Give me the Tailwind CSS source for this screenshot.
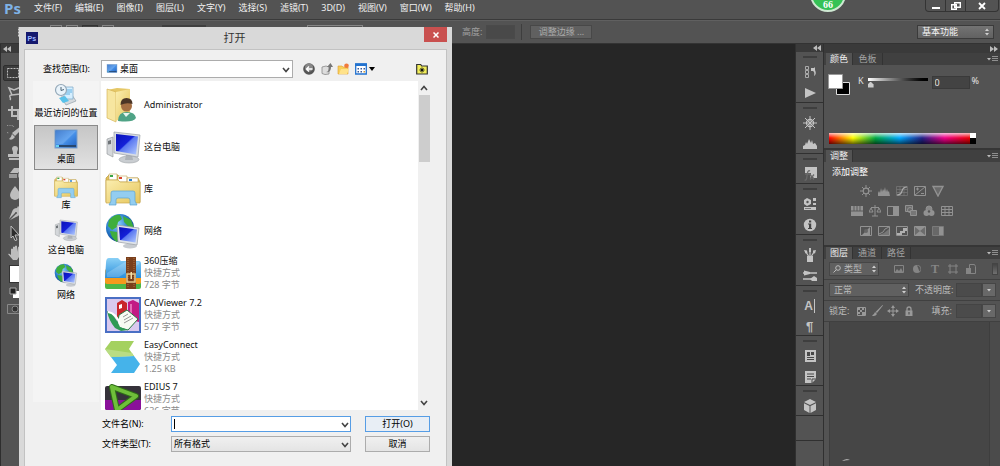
<!DOCTYPE html>
<html lang="zh-CN">
<head>
    <meta charset="UTF-8">
    <meta name="viewport" content="width=device-width, initial-scale=1.0">
    <title>打开</title>
    <script src="https://cdn.jsdelivr.net/npm/@tailwindcss/browser@4"></script>
</head>
<body class="relative flex h-screen flex-col overflow-hidden bg-[#262626] font-['Noto_Sans','Noto_Sans_CJK_SC',sans-serif] text-[9px] leading-3 text-[#e4e4e4]">

    <!-- Shared icons -->
    <svg class="absolute h-0 w-0" aria-hidden="true">
        <defs>
            <linearGradient id="gScreen" x1="0" y1="0" x2="1" y2="1"><stop offset="0" stop-color="#0a12b8"/><stop offset=".45" stop-color="#1420d8"/><stop offset=".5" stop-color="#5a78f0"/><stop offset="1" stop-color="#b4ccff"/></linearGradient>
            <linearGradient id="gFolder" x1="0" y1="0" x2="1" y2="1"><stop offset="0" stop-color="#fbeeb0"/><stop offset="1" stop-color="#e6c65c"/></linearGradient>
            <linearGradient id="gDesk" x1="0" y1="0" x2="1" y2="1"><stop offset="0" stop-color="#2366c4"/><stop offset=".5" stop-color="#4a95ec"/><stop offset="1" stop-color="#1f5fc0"/></linearGradient>
            <radialGradient id="gGlobe" cx=".4" cy=".35" r=".7"><stop offset="0" stop-color="#8fd4ff"/><stop offset=".6" stop-color="#2577c8"/><stop offset="1" stop-color="#0c3c80"/></radialGradient>
            <linearGradient id="gBlue" x1="0" y1="0" x2="0" y2="1"><stop offset="0" stop-color="#8ad0f6"/><stop offset="1" stop-color="#2b8fdc"/></linearGradient>
        </defs>
        <symbol id="pc" viewBox="0 0 36 36">
            <path d="M2 10l6-2v20l-6-3z" fill="#d4d7da" stroke="#8d9296" stroke-width=".6"/>
            <path d="M3 12l3-1v4l-3 .5z" fill="#6f7478"/>
            <ellipse cx="24" cy="30.500" rx="10" ry="3.500" fill="#c9cdd1" stroke="#9da2a6" stroke-width=".6"/>
            <path d="M21 26h6l1 5h-8z" fill="#aeb3b8"/>
            <path d="M9 3l26 3-2 22-24-4z" fill="#d9dde2" stroke="#9a9fa6" stroke-width=".7"/>
            <path d="M11 5l22 2.500-2 18L11 22z" fill="url(#gScreen)"/>
        </symbol>
        <symbol id="library" viewBox="0 0 36 36">
            <path d="M1 7l3-3h9l2 3h18l2 4v20H1z" fill="#e3c25c" stroke="#b8963c" stroke-width=".7"/>
            <path d="M4 3h8v6H4zM13 5h9v6h-9zM22 7h11v5H22z" fill="#fff" stroke="#c0a24f" stroke-width=".6"/>
            <path d="M5 4h3v2H5z" fill="#3aa648"/><path d="M14 6h3v2h-3z" fill="#d8432f"/><path d="M24 8h3v2h-3z" fill="#2d80d0"/>
            <path d="M1 9h12l2 2h20v21H1z" fill="url(#gFolder)" stroke="#c9a84a" stroke-width=".7"/>
            <path d="M6 22q0-2 2-2h20q2 0 2 2v8l2 4h-7v-5q0-2-2-2H13q-2 0-2 2v5H4l2-4z" fill="#93cdf0" stroke="#5ba3d0" stroke-width=".7"/>
        </symbol>
        <symbol id="network" viewBox="0 0 36 36">
            <circle cx="15" cy="15" r="14" fill="url(#gGlobe)"/>
            <path d="M4 7q6-6 11-5l2 4-4 3-1 5-5 3-4-4zM18 3l8 4 3 8-5-1-5-5zM5 18l7 1 3 5-3 5q-6-4-7-11z" fill="#3fae3c"/>
            <ellipse cx="25" cy="33" rx="7" ry="2.500" fill="#c7cbd0"/>
            <path d="M12 12l22 3-2 17-19-3z" fill="#dfe3e8" stroke="#969ca3" stroke-width=".7"/>
            <path d="M14 14l18 2.500-1.500 13L15 27z" fill="url(#gScreen)"/>
        </symbol>
        <symbol id="desk" viewBox="0 0 24 20">
            <rect x="1" y="1" width="22" height="18" fill="url(#gDesk)" stroke="#7da0c8"/>
            <path d="M2 2h20L9 15H2z" fill="#fff" opacity=".15"/>
            <path d="M2 16h20v2H2z" fill="#27476f"/><path d="M2 16h3v2H2z" fill="#67d1f0"/>
        </symbol>
        <symbol id="chev" viewBox="0 0 8 6"><path d="M1 1l3 3.500L7 1" fill="none" stroke="#444" stroke-width="1.600"/></symbol>
        <symbol id="updown" viewBox="0 0 6 8"><path d="M1 3l2-2.500L5 3zM1 5l2 2.500L5 5z" fill="#d0d0d0"/></symbol>
        <symbol id="panelMenu" viewBox="0 0 12 8"><path d="M1 3h4L3 5.500z" fill="#bbb"/><path d="M6 1.500h6M6 3.500h6M6 5.500h6" stroke="#999" stroke-width=".9"/></symbol>
    </svg>

    <!-- Menu bar -->
    <header class="flex h-5 shrink-0 items-start border-b border-[#3a3a3a] bg-[#535353]">
        <span class="w-8 pl-1 font-['Open_Sans',sans-serif] text-[15px] font-bold leading-4 text-[#7fb2e6]">Ps</span>
        <nav class="flex gap-[13px] whitespace-nowrap pl-0.5 pt-0.5 text-[#f0f0f0]">
            <a href="#">文件(F)</a>
            <a href="#">编辑(E)</a>
            <a href="#">图像(I)</a>
            <a href="#">图层(L)</a>
            <a href="#">文字(Y)</a>
            <a href="#">选择(S)</a>
            <a href="#">滤镜(T)</a>
            <a href="#">3D(D)</a>
            <a href="#">视图(V)</a>
            <a href="#">窗口(W)</a>
            <a href="#">帮助(H)</a>
        </nav>
        <div class="ml-auto mr-px flex h-3 rounded-b-sm border border-t-0 border-[#343434]">
            <button aria-label="最小化" class="flex w-5 items-center justify-center border-r border-[#343434]"><svg class="h-2 w-2" viewBox="0 0 8 8"><path d="M0 5h8v2H0z" fill="#fff"/></svg></button>
            <button aria-label="还原" class="flex w-5 items-center justify-center border-r border-[#343434]"><svg class="h-2 w-2.5" viewBox="0 0 10 8"><path d="M3.700.7h5.600v4.600H3.700zM.7 2.700h4.600v4.600H.7z" fill="#535353" stroke="#fff" stroke-width="1.400"/></svg></button>
            <button aria-label="关闭" class="flex w-8 items-center justify-center"><svg class="h-2 w-2" viewBox="0 0 8 8"><path d="M1 1l6 6M7 1L1 7" stroke="#fff" stroke-width="1.800"/></svg></button>
        </div>
    </header>

    <!-- Options bar -->
    <section class="flex h-6 shrink-0 items-center border-b border-[#333] border-t border-t-[#606060] bg-[#535353] pr-1.5">
        <svg class="ml-4 h-3.5 w-3.5" viewBox="0 0 14 14"><path d="M2.500 2.500h9v9h-9z" fill="none" stroke="#ccc" stroke-dasharray="2 1"/></svg>
        <div class="ml-5 flex gap-1">
            <span class="h-3.5 w-3 border border-[#858585]"></span>
            <span class="h-3.5 w-3 border border-[#858585]"></span>
            <span class="h-3.5 w-4 border border-[#333] bg-[#444]"></span>
            <span class="h-3.5 w-3 border border-[#858585]"></span>
        </div>
        <span class="ml-12 h-3.5 w-11 bg-[#3f3f3f]"></span>
        <span class="ml-[101px] h-3.5 w-14 border border-[#858585]"></span>
        <label for="optHeight" class="ml-[99px] whitespace-nowrap text-[#a0a0a0]">高度:</label>
        <input id="optHeight" type="text" class="ml-1 h-3.5 w-[29px] border border-[#4a4a4a] bg-[#494949]">
        <span class="ml-1.5 h-4 w-px bg-[#3e3e3e]"></span>
        <button class="ml-2 h-3.5 w-[62px] whitespace-nowrap border border-[#484848] bg-[#606060] leading-3 text-[#aaa]">调整边缘 ...</button>
        <div class="relative ml-auto">
            <select aria-label="工作区" class="h-3.5 w-[77px] appearance-none border border-[#3b3b3b] bg-linear-to-b from-[#737373] to-[#616161] pl-1 leading-3 text-[#f4f4f4]"><option>基本功能</option></select>
            <svg class="pointer-events-none absolute right-1 top-[3px] h-2 w-1.5"><use href="#updown"/></svg>
        </div>
    </section>

    <div class="flex min-h-0 flex-1">
        <!-- Tools -->
        <aside class="w-8 shrink-0 border-l border-[#2e2e2e] bg-[#535353]">
            <div class="flex h-[9px] items-center bg-[#3a3a3a] pl-0.5"><svg class="h-1.5 w-2" viewBox="0 0 8 6"><path d="M4 0v6L0 3zM8 0v6L4 3z" fill="#bbb"/></svg></div>
            <div class="flex flex-col gap-1 pt-3 text-[#bdbdbd]">
                <button aria-label="矩形选框" class="ml-0.5 flex h-4 w-5 items-center justify-center rounded-xs border border-[#2e2e2e] bg-[#3c3c3c]"><svg class="h-3 w-3" viewBox="0 0 12 12"><path d="M.5 1.500h11v9H.5z" fill="none" stroke="currentColor" stroke-dasharray="2 1"/></svg></button>
                <button aria-label="套索" class="ml-1.5 h-4 w-4"><svg viewBox="0 0 16 16"><path d="M2 3l5 2 7-3-1 7-8 1zM5 10q-3 0-2 2t0 3" fill="none" stroke="currentColor" stroke-width="1.500"/></svg></button>
                <button aria-label="裁剪" class="ml-1.5 h-4 w-4"><svg viewBox="0 0 16 16"><path d="M5 1v10h10M1 5h10v10" fill="none" stroke="currentColor" stroke-width="2"/></svg></button>
                <button aria-label="修复画笔" class="ml-1.5 h-4 w-4"><svg viewBox="0 0 16 16"><path d="M14 1q2 2 0 4l-6 6-3-3z" fill="currentColor"/><path d="M5 9l3 3q-3 4-6 2 2-1 3-5z" fill="currentColor"/><path d="M7 2a5 4 0 1 0-5 6" fill="none" stroke="currentColor" stroke-dasharray="1 1"/></svg></button>
                <button aria-label="图章" class="ml-1.5 h-4 w-4"><svg viewBox="0 0 16 16"><path d="M6 7L5 4q0-3 3-3t3 3l-1 3v2h5v3H1V9h5zM2 13h12v2H2z" fill="currentColor"/></svg></button>
                <button aria-label="橡皮擦" class="ml-1.5 h-4 w-4"><svg viewBox="0 0 16 16"><path d="M7 3h8l-4 5H3z" fill="currentColor"/><path d="M2 9h8v4H2zM11 9l4-5v4l-4 5z" fill="#999"/></svg></button>
                <button aria-label="模糊" class="ml-1.5 h-4 w-4"><svg viewBox="0 0 16 16"><path d="M8 1q5 6 5 9a5 5 0 0 1-10 0q0-3 5-9z" fill="currentColor"/></svg></button>
                <button aria-label="钢笔" class="ml-1.5 h-4 w-4"><svg viewBox="0 0 16 16"><path d="M11 1l4 4-2 2q0 4-4 5l-6 3 6-6a1 1 0 1 0-1-1l-6 6 3-7q1-4 5-4z" fill="currentColor"/></svg></button>
                <button aria-label="路径选择" class="ml-1.5 h-4 w-4"><svg viewBox="0 0 16 16"><path d="M4 1l8 9H8l2 5-2 .5L6 11l-2 2z" fill="#2c2c2c" stroke="currentColor"/></svg></button>
                <button aria-label="抓手" class="ml-1.5 h-4 w-4"><svg viewBox="0 0 16 16"><path d="M4 10V4q1-1 2 0v3-5q1-1 2 0v5-6q1-1 2 0v6l1-5q1-1 2 0v6l-1 4-2 3H6L1 9q1-1 3 1z" fill="currentColor"/></svg></button>
                <span class="ml-2 h-[18px] w-5 border border-[#333] bg-white"></span>
                <svg class="ml-2 h-3 w-3" viewBox="0 0 12 12"><path d="M4 4h7v7H4z" fill="#fff"/><path d="M1 1h6v6H1z" fill="#222" stroke="#aaa"/></svg>
                <svg class="ml-1.5 h-3 w-4" viewBox="0 0 16 12"><path d="M.5 1.500h15v9H.5z" fill="none" stroke="#888"/><circle cx="8" cy="6" r="3" fill="#333" stroke="#888"/></svg>
            </div>
        </aside>

        <main class="min-w-0 flex-1"></main>

        <!-- Collapsed panel icons -->
        <aside class="w-[29px] shrink-0 border-x border-[#303030] bg-[#535353] text-[#c4c4c4]">
            <div class="flex h-2 items-center justify-end bg-[#3a3a3a] pr-0.5"><svg class="h-1.5 w-2" viewBox="0 0 8 6"><path d="M4 0v6L0 3zM8 0v6L4 3z" fill="#bbb"/></svg></div>
            <div class="flex h-[51px] flex-col items-center gap-[7px] border-b border-[#303030] pt-1">
                <span class="h-0.5 w-3.5 shrink-0 bg-[#3e3e3e]"></span>
                <svg class="h-3.5 w-3.5 shrink-0" viewBox="0 0 14 14"><path d="M2.500 1.500h3v3h-3zM2.500 5.500h3v3h-3zM2.500 9.500h3v3h-3z" fill="none" stroke="#aaa"/><path d="M8 3h3l1-1v3q2 4-1 6 1-4-1-5H8z" fill="currentColor"/></svg>
                <svg class="h-3.5 w-3.5 shrink-0" viewBox="0 0 14 14"><path d="M2 2l11 5-11 5z" fill="currentColor"/></svg>
            </div>
            <div class="flex h-[51px] flex-col items-center gap-[7px] border-b border-[#303030] pt-1">
                <span class="h-0.5 w-3.5 shrink-0 bg-[#3e3e3e]"></span>
                <svg class="h-3.5 w-3.5 shrink-0" viewBox="0 0 14 14"><path d="M7 0v14M0 7h14M2 2l10 10M12 2L2 12" stroke="currentColor"/><circle cx="7" cy="7" r="3.500" fill="none" stroke="currentColor" stroke-width="1.300"/></svg>
                <svg class="h-3.5 w-3.5 shrink-0" viewBox="0 0 14 14"><path d="M0 12V9l2-1 1-3 1 2 2-5 2 4 1-3 1 4 2-1 2 3v3z" fill="currentColor"/></svg>
            </div>
            <div class="flex h-[30px] flex-col items-center gap-[7px] border-b border-[#303030] pt-1">
                <span class="h-0.5 w-3.5 shrink-0 bg-[#3e3e3e]"></span>
                <svg class="h-3.5 w-3.5 shrink-0" viewBox="0 0 14 14"><path d="M2 0h12v11h-3L9 9l-2 2 1-5H2z" fill="currentColor"/><path d="M7 4q-2-1-2.500 2L3.500 12q-.5 1.500-2 1M2 7h5M7 7.500l4 5M11 7.500l-4 5" fill="none" stroke="#6a6a6a" stroke-width="1.300"/></svg>
            </div>
            <div class="flex h-[51px] flex-col items-center gap-[7px] border-b border-[#303030] pt-1">
                <span class="h-0.5 w-3.5 shrink-0 bg-[#3e3e3e]"></span>
                <svg class="h-3.5 w-3.5 shrink-0" viewBox="0 0 14 14"><path d="M4 1l4 2v4L4 9 1 7V3zM10 1h3v3h-3zM10 6h3v2h-3zM1 10h12v3H1z" fill="currentColor"/><circle cx="4.500" cy="5" r="1.200" fill="#535353"/><path d="M2 11.500h6" stroke="#777"/></svg>
                <svg class="h-3.5 w-3.5 shrink-0" viewBox="0 0 14 14"><circle cx="7" cy="7" r="6.200" fill="currentColor"/><path d="M6 2.500h2.200v2H6zM5 5.500h3.200V10H9v1H5v-1h1V6.500H5z" fill="#444"/></svg>
            </div>
            <div class="flex h-[51px] flex-col items-center gap-[7px] border-b border-[#303030] pt-1">
                <span class="h-0.5 w-3.5 shrink-0 bg-[#3e3e3e]"></span>
                <svg class="h-3.5 w-3.5 shrink-0" viewBox="0 0 14 14"><path d="M4 8h6v6H4z" fill="currentColor"/><path d="M5.500 8L3 4M7 8V2M8.500 8L11 4" stroke="currentColor" stroke-width="1.200"/><path d="M1 2l3 .5.500 2.500-2 .5zM6 0h2v4H6zM10 2.500l3-.5-1 3.500-2-.5z" fill="currentColor"/></svg>
                <svg class="h-3.5 w-3.5 shrink-0" viewBox="0 0 14 14"><path d="M0 4h14M0 10h14" stroke="currentColor" stroke-width="1.500"/><path d="M1 1.500l6 1.500v2L1 6.500zM7 10l4-3 3 2v3H9z" fill="currentColor"/></svg>
            </div>
            <div class="flex h-[50px] flex-col items-center gap-[7px] border-b border-[#303030] pt-1">
                <span class="h-0.5 w-3.5 shrink-0 bg-[#3e3e3e]"></span>
                <span class="h-3.5 shrink-0 border-r border-[#c4c4c4] pr-px font-['Liberation_Sans',sans-serif] text-[12px] font-bold leading-[14px]">A</span>
                <span class="h-3.5 shrink-0 font-['Liberation_Sans',sans-serif] text-[13px] font-bold leading-[14px]">¶</span>
            </div>
            <div class="flex h-[50px] flex-col items-center gap-[7px] border-b border-[#303030] pt-1">
                <span class="h-0.5 w-3.5 shrink-0 bg-[#3e3e3e]"></span>
                <svg class="h-3.5 w-3.5 shrink-0" viewBox="0 0 14 14"><path d="M2 1h11v12H2z" fill="currentColor"/><path d="M4 3h3v4H4zM8 3h3v3H8zM4 8h7v1H4zM4 10h7v1H4z" fill="#484848"/></svg>
                <svg class="h-3.5 w-3.5 shrink-0" viewBox="0 0 14 14"><path d="M2 1h11v8l-4 4H2z" fill="currentColor"/><path d="M4 4h7M4 6.500h7M4 9h4M9 13V9h4" fill="none" stroke="#484848"/></svg>
            </div>
            <div class="flex h-[30px] flex-col items-center gap-[7px] border-b border-[#303030] pt-1">
                <span class="h-0.5 w-3.5 shrink-0 bg-[#3e3e3e]"></span>
                <svg class="h-3.5 w-3.5 shrink-0" viewBox="0 0 14 14"><path d="M7 0l6 3-6 3-6-3zM1 4.200l5.500 2.800v7L1 11zM13 4.200L7.500 7v7l5.500-3z" fill="currentColor"/></svg>
            </div>
            <div class="h-[25px] border-b border-[#303030]"></div>
        </aside>

        <!-- Panels -->
        <aside class="flex w-44 shrink-0 flex-col bg-[#535353]">
            <div class="flex h-[9px] shrink-0 items-center justify-end bg-[#3a3a3a] pr-0.5"><svg class="h-1.5 w-2" viewBox="0 0 8 6"><path d="M0 0v6l4-3zM4 0v6l4-3z" fill="#bbb"/></svg></div>

            <section class="h-[97px] shrink-0 border-b-2 border-[#363636]">
                <div class="flex h-3 items-center bg-[#404040] pl-0.5 text-[#a4a4a4]">
                    <button class="h-3 w-[27px] border-r border-[#333] bg-[#535353] leading-3 text-[#eee]">颜色</button>
                    <button class="h-3 w-[30px] border-r border-[#333] leading-3">色板</button>
                    <svg class="ml-auto mr-0.5 h-2 w-3"><use href="#panelMenu"/></svg>
                </div>
                <div class="flex items-start pl-1 pt-[9px]">
                    <svg class="h-6 w-6" viewBox="0 0 24 24"><path d="M8.500 8.500h13v12h-13z" fill="#000" stroke="#ddd"/><path d="M.5.5h14v14H.5z" fill="#fff" stroke="#999"/></svg>
                    <label for="kRange" class="ml-1.5 pt-px text-[#ddd]">K</label>
                    <input id="kRange" type="range" min="0" max="100" value="0" class="ml-1 mt-1 h-[3px] w-[60px] appearance-none bg-linear-to-r from-white to-black [&::-webkit-slider-thumb]:mt-2.5 [&::-webkit-slider-thumb]:h-1.5 [&::-webkit-slider-thumb]:w-1.5 [&::-webkit-slider-thumb]:appearance-none [&::-webkit-slider-thumb]:bg-[#ccc] [&::-webkit-slider-thumb]:[clip-path:polygon(50%_0,100%_50%,100%_100%,0_100%,0_50%)]">
                    <input type="text" aria-label="K 值" value="0" class="ml-1 mt-0.5 h-[13px] w-[38px] border border-[#3a3a3a] bg-[#434343] px-0.5 leading-3">
                    <span class="ml-0.5 pt-px">%</span>
                </div>
                <div class="ml-[5px] mt-[35px] flex h-[11px] w-[147px]">
                    <div class="flex-1 bg-[linear-gradient(to_bottom,rgba(255,255,255,.75),transparent_45%,rgba(0,0,0,.6)),linear-gradient(to_right,#f00,#ff0_17%,#0a4_33%,#0af_50%,#228_66%,#e08_82%,#e00)]"></div>
                    <div class="w-1.5 bg-linear-to-b from-white from-50% to-black to-50%"></div>
                </div>
            </section>

            <section class="h-[97px] shrink-0 border-b-2 border-[#363636]">
                <div class="flex h-3 items-center bg-[#404040] pl-0.5">
                    <button class="h-3 w-[27px] border-r border-[#333] bg-[#535353] leading-3 text-[#eee]">调整</button>
                    <svg class="ml-auto mr-0.5 h-2 w-3"><use href="#panelMenu"/></svg>
                </div>
                <p class="pl-2 pt-1 text-white">添加调整</p>
                <div class="mr-5 flex flex-col items-center gap-2 pt-[7px] text-[#929292]">
                    <div class="flex gap-1.5">
                        <svg class="h-3 w-3" viewBox="0 0 12 12"><path d="M6 0v12M0 6h12M2 2l8 8M10 2l-8 8" stroke="currentColor"/><circle cx="6" cy="6" r="2.800" fill="#535353" stroke="currentColor" stroke-width="1.200"/></svg>
                        <svg class="h-3 w-3" viewBox="0 0 12 12"><path d="M0 11V8l1-2 1 2 1-5 1 4 1-3 1 2 1-4 1 5 1-3 1 3 1-1 1 5z" fill="currentColor"/></svg>
                        <svg class="h-3 w-3" viewBox="0 0 12 12"><path d="M.5 1.500h11v9H.5zM.5 4.500h11M.5 7.500h11M4 1v10M8 1v10" fill="none" stroke="#7a7a7a" stroke-width=".7"/><path d="M1 10q4 0 5-4t5-4" fill="none" stroke="#aaa" stroke-width="1.200"/></svg>
                        <svg class="h-3 w-3" viewBox="0 0 12 12"><path d="M.5 1.500h11v9H.5zM1 10l10-8M2 4h3M3.500 2.500v3M7 8.500h3" fill="none" stroke="currentColor"/></svg>
                        <svg class="h-3 w-3" viewBox="0 0 12 12"><path d="M1 1.500h10L6 11z" fill="#6a6a6a" stroke="currentColor" stroke-width="1.400"/></svg>
                    </div>
                    <div class="flex gap-1.5">
                        <svg class="h-3 w-3" viewBox="0 0 12 12"><path d="M0 1h12v10H0z" fill="currentColor"/><path d="M0 6h12M3 1v5M6 1v5M9 1v5" stroke="#5b5b5b"/></svg>
                        <svg class="h-3 w-3" viewBox="0 0 12 12"><path d="M6 0v11M2 2.500h8M3 11h6M0 7l2-4 2 4zM8 7l2-4 2 4z" fill="none" stroke="currentColor"/></svg>
                        <svg class="h-3 w-3" viewBox="0 0 12 12"><path d="M.5 1.500h11v9H.5z" fill="none" stroke="currentColor"/><path d="M6 1h6v10H6z" fill="currentColor"/></svg>
                        <svg class="h-3 w-3" viewBox="0 0 12 12"><path d="M.5.5h7v6h-7z" fill="#6a6a6a" stroke="currentColor"/><circle cx="5" cy="5" r="2.500" fill="none" stroke="currentColor"/><path d="M5.500 5.500h6v5h-6z" fill="#777" stroke="currentColor"/></svg>
                        <svg class="h-3 w-3" viewBox="0 0 12 12"><circle cx="6" cy="4" r="3" fill="#888" stroke="currentColor"/><circle cx="3.500" cy="8" r="3" fill="currentColor"/><circle cx="8.500" cy="8" r="3" fill="currentColor"/><circle cx="6" cy="6.500" r="1.200" fill="#555"/></svg>
                        <svg class="h-3 w-3" viewBox="0 0 12 12"><path d="M.5 1.500h11v9H.5zM.5 4.500h11M.5 7.500h11M4 1v10M8 1v10" fill="none" stroke="currentColor"/></svg>
                    </div>
                    <div class="flex gap-1.5">
                        <svg class="h-3 w-3" viewBox="0 0 12 12"><path d="M.5 1.500h11v9H.5z" fill="none" stroke="currentColor"/><path d="M2 10L10 2v8z" fill="currentColor"/><circle cx="6" cy="6" r="2" fill="#666"/></svg>
                        <svg class="h-3 w-3" viewBox="0 0 12 12"><path d="M.5 1.500h11v9H.5zM1 9l4-2 2-3 4-2" fill="none" stroke="currentColor"/><path d="M1 10l5-2 5-4v6z" fill="#777"/></svg>
                        <svg class="h-3 w-3" viewBox="0 0 12 12"><path d="M.5 1.500h11v9H.5z" fill="none" stroke="currentColor"/><path d="M1 8h3V6h3V3h4v3H9v2H6v2H1z" fill="#b0b0b0"/></svg>
                        <svg class="h-3 w-3" viewBox="0 0 12 12"><path d="M.5 1.500h11v9H.5z" fill="#6c6c6c" stroke="currentColor"/><path d="M1 2l5 4 5-4M1 10l5-4 5 4z" fill="currentColor"/></svg>
                        <svg class="h-3 w-3" viewBox="0 0 12 12"><path d="M.5 1.500h11v9H.5z" fill="#686868" stroke="#7a7a7a"/><path d="M7 2h4v8H7z" fill="currentColor"/></svg>
                    </div>
                </div>
            </section>

            <section class="flex min-h-0 flex-1 flex-col">
                <div class="flex h-3 shrink-0 items-center bg-[#404040] pl-0.5 text-[#a4a4a4]">
                    <button class="h-3 w-[27px] border-r border-[#333] bg-[#535353] leading-3 text-[#eee]">图层</button>
                    <button class="h-3 w-[29px] border-r border-[#333] leading-3">通道</button>
                    <button class="h-3 w-[29px] border-r border-[#333] leading-3">路径</button>
                    <svg class="ml-auto mr-0.5 h-2 w-3"><use href="#panelMenu"/></svg>
                </div>
                <div class="flex h-[21px] shrink-0 items-center border-b border-[#404040] pl-[5px]">
                    <div class="relative">
                        <select aria-label="图层筛选" class="h-3.5 w-[50px] appearance-none border border-[#464646] bg-[#606060] pl-3.5 leading-3 text-[#bbb]"><option>类型</option></select>
                        <svg class="pointer-events-none absolute left-1 top-[3px] h-2 w-2" viewBox="0 0 8 8"><circle cx="5" cy="3" r="2.300" fill="none" stroke="#bbb"/><path d="M3.500 4.500L.5 7.500" stroke="#bbb"/></svg>
                        <svg class="pointer-events-none absolute right-0.5 top-[3px] h-2 w-1.5"><use href="#updown"/></svg>
                    </div>
                    <div class="ml-3.5 flex gap-1.5 text-[#858585]">
                        <svg class="h-3 w-3" viewBox="0 0 12 12"><path d="M1.500 2.500h9v7h-9z" fill="none" stroke="currentColor"/><path d="M2 9l2-3 2 2 2-3 2 4z" fill="currentColor"/></svg>
                        <svg class="h-3 w-3" viewBox="0 0 12 12"><circle cx="6" cy="6" r="4" fill="currentColor"/><path d="M6 2.500a3.500 3.500 0 0 1 2.500 6z" fill="#555"/></svg>
                        <span class="w-3 text-center font-['Liberation_Serif',serif] text-[12px] font-bold leading-3">T</span>
                        <svg class="h-3 w-3" viewBox="0 0 12 12"><path d="M3 1v10M9 1v10M1 3h10M1 9h10" stroke="currentColor"/></svg>
                        <svg class="h-3 w-3" viewBox="0 0 12 12"><path d="M4.500 1.500h5l1 2v7h-6z" fill="none" stroke="currentColor"/><path d="M1 5h5v6H1z" fill="currentColor"/></svg>
                    </div>
                    <span class="ml-auto mr-0.5 h-3 w-1.5 border border-[#444] bg-linear-to-b from-[#444] to-[#707070]"></span>
                </div>
                <div class="flex h-[21px] shrink-0 items-center border-b border-[#404040] pl-[5px] text-[#bbb]">
                    <div class="relative">
                        <select aria-label="混合模式" class="h-3.5 w-20 appearance-none border border-[#464646] bg-[#606060] pl-1 leading-3"><option>正常</option></select>
                        <svg class="pointer-events-none absolute right-0.5 top-[3px] h-2 w-1.5"><use href="#updown"/></svg>
                    </div>
                    <label for="opacity" class="ml-1.5 whitespace-nowrap">不透明度:</label>
                    <input id="opacity" type="text" class="ml-auto h-3.5 w-[26px] border border-[#444] bg-[#4b4b4b]">
                    <button aria-label="不透明度选项" class="mr-1 flex h-3.5 w-3.5 items-center justify-center border border-[#464646] bg-[#686868]"><svg class="h-1 w-1.5" viewBox="0 0 6 4"><path d="M1 1h4L3 3.500z" fill="#ccc"/></svg></button>
                </div>
                <div class="flex h-[21px] shrink-0 items-center border-b border-[#404040] pl-[5px] text-[#bbb]">
                    <span class="whitespace-nowrap">锁定:</span>
                    <div class="ml-1.5 flex gap-1 text-[#999]">
                        <svg class="h-3 w-3" viewBox="0 0 12 12"><path d="M2.500 2.500h8v8h-8z" fill="none" stroke="currentColor"/><path d="M3 3h2v2H3zM7 3h2v2H7zM5 5h2v2H5zM3 7h2v2H3zM7 7h3v3H7z" fill="currentColor"/></svg>
                        <svg class="h-3 w-3" viewBox="0 0 12 12"><path d="M11.500 0L12 .5 6 8 4.500 7zM4 7l2 2q-2 3-5 1.500Q3 10 4 7z" fill="currentColor"/></svg>
                        <svg class="h-3 w-3" viewBox="0 0 12 12"><path d="M6 2v8M2 6h8" stroke="currentColor"/><path d="M4 3l2-3 2 3zM4 9l2 3 2-3zM3 4L0 6l3 2zM9 4l3 2-3 2z" fill="currentColor"/></svg>
                        <svg class="h-3 w-3" viewBox="0 0 12 12"><path d="M4 6V4q0-2 2-2t2 2v2" fill="none" stroke="currentColor" stroke-width="1.300"/><path d="M2.500 5.500h7V11h-7z" fill="currentColor"/><path d="M5.500 7h1v2.500h-1z" fill="#444"/></svg>
                    </div>
                    <label for="fill" class="ml-auto whitespace-nowrap">填充:</label>
                    <input id="fill" type="text" class="ml-1 h-3.5 w-[26px] border border-[#444] bg-[#4b4b4b]">
                    <button aria-label="填充选项" class="mr-1 flex h-3.5 w-3.5 items-center justify-center border border-[#464646] bg-[#686868]"><svg class="h-1 w-1.5" viewBox="0 0 6 4"><path d="M1 1h4L3 3.500z" fill="#ccc"/></svg></button>
                </div>
                <div class="flex min-h-0 flex-1 pl-[5px]">
                    <div class="flex flex-1 items-end border-x border-[#3e3e3e] bg-[#464646] pb-1 pl-3"><svg class="h-1 w-2" viewBox="0 0 8 4"><path d="M0 3q4-3 8-1-4 0-8 1z" fill="#ccc"/></svg></div>
                    <div class="w-2.5 bg-[#4b4b4b]"></div>
                </div>
            </section>
        </aside>
    </div>

    <!-- Floating badge -->
    <div class="absolute -top-6 right-[154px] flex h-9 w-9 items-end justify-center rounded-full border-2 border-[#cfe9d3] bg-[#35c255] font-['Liberation_Serif',serif] text-[10px] font-bold leading-[10px] text-white">66</div>

    <!-- Open dialog -->
    <div role="dialog" aria-label="打开" class="absolute bottom-0 left-[19px] top-[27px] flex w-[433px] flex-col bg-[#d9d9d9] px-[5px] text-black">
        <div class="relative flex h-[22px] shrink-0 items-center">
            <svg class="ml-0.5 h-3 w-3" viewBox="0 0 12 12"><path d="M0 0h12v12H0z" fill="#15196e"/><text x="1.500" y="8.500" font-size="7" font-weight="bold" fill="#9fb8ff" font-family="Liberation Sans">Ps</text></svg>
            <h1 class="flex-1 pr-4 text-center text-[11px] text-[#333]">打开</h1>
            <button aria-label="关闭" class="absolute right-0 top-0 flex h-[15px] w-[23px] items-center justify-center bg-[#c9504f]"><svg class="h-1.5 w-1.5" viewBox="0 0 6 6"><path d="M.5.5l5 5M5.500.5l-5 5" stroke="#fff" stroke-width="1.500"/></svg></button>
        </div>

        <div class="flex min-h-0 flex-1 flex-col border border-b-0 border-[#c2c2c2] bg-[#f0f0f0] pl-2 pr-4">
            <!-- Look in -->
            <div class="flex h-[31px] shrink-0 items-center pt-1.5">
                <label for="lookIn" class="w-[68px] whitespace-nowrap pl-2.5">查找范围(I):</label>
                <div class="relative flex h-[18px] w-48 items-center border border-[#acacac] bg-white">
                    <svg class="ml-1 h-[9px] w-3"><use href="#desk"/></svg>
                    <select id="lookIn" class="h-4 flex-1 appearance-none pl-0.5 leading-4"><option>桌面</option></select>
                    <svg class="pointer-events-none absolute right-0.5 top-1.5 h-1.5 w-2"><use href="#chev"/></svg>
                </div>
                <button aria-label="后退" class="ml-2.5"><svg class="h-3 w-3" viewBox="0 0 12 12"><circle cx="6" cy="6" r="5.800" fill="#555"/><circle cx="6" cy="4.500" r="4" fill="#888"/><path d="M9.500 6h-6M6 3.500L3.500 6 6 8.500" fill="none" stroke="#fff" stroke-width="1.400"/></svg></button>
                <button aria-label="向上一级" class="ml-1.5"><svg class="h-3 w-3" viewBox="0 0 12 12"><path d="M1 4l4-1 3 1v7l-4 .5-3-1z" fill="#ddd" stroke="#888" stroke-width=".8"/><path d="M5 9q3 0 3-5H6l3.500-4L12 4h-2q0 6-5 5z" fill="#777"/></svg></button>
                <button aria-label="新建文件夹" class="ml-1"><svg class="h-3 w-3" viewBox="0 0 12 12"><path d="M1 3h4l1 1h5v7H1z" fill="#f7cf5a" stroke="#e0a030" stroke-width=".6"/><path d="M2 11l2-5h8l-2 5z" fill="#ffe28a"/><circle cx="9.500" cy="2.800" r="2.300" fill="#f07a3c"/></svg></button>
                <button aria-label="查看" class="ml-1.5 flex items-center gap-0.5"><svg class="h-3 w-3" viewBox="0 0 12 12"><path d="M.7 1h10.600v10H.7z" fill="#fff" stroke="#2272cf" stroke-width="1.300"/><path d="M0 .5h12V3H0z" fill="#2272cf"/><path d="M2.500 5h1.500v1.500H2.500zM5.500 5H7v1.500H5.500zM8.500 5H10v1.500H8.500zM2.500 8h1.500v1.500H2.500zM5.500 8H7v1.500H5.500z" fill="#3a5a9a"/><path d="M8.500 8H10v1.500H8.500z" fill="#d89a30"/></svg><svg class="h-1 w-1.5" viewBox="0 0 6 4"><path d="M0 0h6L3 4z" fill="#000"/></svg></button>
                <button aria-label="收藏夹" class="ml-auto mr-0.5"><svg class="h-3 w-3" viewBox="0 0 12 12"><path d="M.7 1.500h4l1 1.500h5.600v8H.7z" fill="#f2ee5a" stroke="#333" stroke-width="1.200"/><path d="M6 4.500v5M3.500 7h5M4.500 5.500l3 3M7.500 5.500l-3 3" stroke="#111"/></svg></button>
            </div>

            <div class="flex min-h-0 flex-1">
                <!-- Places -->
                <nav class="mb-2 flex w-[66px] shrink-0 flex-col bg-[#f4f4f4] px-px text-center">
                    <a href="#" class="flex h-11 flex-col items-center justify-end whitespace-nowrap pb-1.5">
                        <svg class="h-6 w-6" viewBox="0 0 24 24"><path d="M7 14l11-2 4 6-10 4z" fill="#d5dade" stroke="#93a0aa" stroke-width=".7"/><path d="M10 4h9v12h-9z" fill="#d5efff" stroke="#86aecb" stroke-width=".8"/><path d="M11 7h7M11 9h7M11 11h5" stroke="#62b1e2"/><circle cx="7" cy="7" r="5.500" fill="#e9f3fa" stroke="#93a8b8" stroke-width="1.200"/><path d="M7 4v3.500l3-1" fill="none" stroke="#4b6577"/><path d="M5 15l6-2 4 5-6 2z" fill="#59c2ea"/></svg>
                        最近访问的位置
                    </a>
                    <a href="#" class="flex h-[45px] flex-col items-center justify-end border border-[#8a8a8a] bg-linear-to-b from-[#c6c6c6] to-[#e2e2e2] pb-1">
                        <svg class="mb-1 h-5 w-6"><use href="#desk"/></svg>
                        桌面
                    </a>
                    <a href="#" class="flex h-[45px] flex-col items-center justify-end pb-1">
                        <svg class="h-6 w-6"><use href="#library"/></svg>
                        库
                    </a>
                    <a href="#" class="flex h-[45px] flex-col items-center justify-end pb-1">
                        <svg class="mb-0.5 h-6 w-6"><use href="#pc"/></svg>
                        这台电脑
                    </a>
                    <a href="#" class="flex h-[45px] flex-col items-center justify-end pb-1">
                        <svg class="mb-0.5 h-6 w-6"><use href="#network"/></svg>
                        网络
                    </a>
                </nav>

                <!-- File list -->
                <div class="ml-0.5 flex min-w-0 flex-1 overflow-hidden bg-white">
                    <ul class="min-w-0 flex-1 pl-1 pt-[3px] text-[#111]">
                        <li class="flex h-[42px] items-center gap-[3px]">
                            <svg class="h-9 w-9" viewBox="0 0 36 36"><path d="M2 3l10-2 13 1v28l-12 3-11-2z" fill="#e5c766"/><path d="M2 2l9 3v30l-9-4z" fill="#f7e6a0" stroke="#d0ad4c" stroke-width=".6"/><path d="M11 5l14-3v25l-14 7z" fill="url(#gFolder)"/><path d="M13 34q0-9 9-9 8 0 9 6-3 5-18 3z" fill="#4fa386"/><path d="M18 26l3 4 4-4z" fill="#e8f4ef"/><circle cx="21.500" cy="19" r="5.500" fill="#a56f43"/><path d="M15.500 18q0-7 6-7t6 6q-6-2-12 1z" fill="#4b3526"/></svg>
                            <span>Administrator</span>
                        </li>
                        <li class="flex h-[42px] items-center gap-[3px]">
                            <svg class="h-9 w-9"><use href="#pc"/></svg>
                            <span>这台电脑</span>
                        </li>
                        <li class="flex h-[42px] items-center gap-[3px]">
                            <svg class="h-9 w-9"><use href="#library"/></svg>
                            <span>库</span>
                        </li>
                        <li class="flex h-[42px] items-center gap-[3px]">
                            <svg class="h-9 w-9"><use href="#network"/></svg>
                            <span>网络</span>
                        </li>
                        <li class="flex h-[42px] items-center gap-[3px]">
                            <svg class="h-9 w-9" viewBox="0 0 36 36"><rect x="0" y="16" width="36" height="18" rx="2" fill="#4db748"/><rect x="0" y="14" width="36" height="15" rx="2" fill="#f59a1d"/><path d="M1 8q0-5 3-5h9l3 3h18q2 0 2 3v14H0z" fill="url(#gBlue)"/><path d="M2 18L20 7h14v2L14 22H2z" fill="#fff" opacity=".2"/><path d="M21 2h10v32H21z" fill="#7a3f1c"/><path d="M23 3v30M29 3v30" stroke="#b2723f" stroke-dasharray="1 1"/><path d="M22 19h8v8h-8z" fill="none" stroke="#e5c98b" stroke-width="1.600"/><path d="M25.500 17h1.500v7h-1.500z" fill="#f4dfa8"/></svg>
                            <div>360压缩<div class="text-[#8a8a8a]">快捷方式</div><div class="text-[#8a8a8a]">728 字节</div></div>
                        </li>
                        <li class="flex h-[42px] items-center gap-[3px]">
                            <svg class="h-9 w-9" viewBox="0 0 36 36"><path d="M1 1h34v34H1z" fill="#d9c9ee" stroke="#4a6fc4" stroke-width="2"/><path d="M12 6l5-3 5 3v14l-10 2z" fill="#c9252b"/><path d="M14 8l3-1v4l-3 1z" fill="#fff"/><path d="M23 5l5-2 6 3v19l-11-3z" fill="#c21a84"/><path d="M26 7v14" stroke="#f08ac8" stroke-width="1.500"/><path d="M14 18l8-5 11 9-10 11-11-3z" fill="#f7fbf3" stroke="#2b7a45"/><path d="M18 20l5-3M19 23l7-4M19 26l9-5" stroke="#999"/><path d="M2 14q8 4 13 16l8 3-7 1-6-3Q4 24 2 14z" fill="#2f9a54"/><path d="M3 15q8 1 12 12" fill="none" stroke="#fff" stroke-width="2"/></svg>
                            <div>CAJViewer 7.2<div class="text-[#8a8a8a]">快捷方式</div><div class="text-[#8a8a8a]">577 字节</div></div>
                        </li>
                        <li class="flex h-[42px] items-center gap-[3px]">
                            <svg class="h-9 w-9" viewBox="0 0 36 36"><path d="M6 2h23l-5 8 5 7-23 1-6-8z" fill="#a4d160"/><path d="M6 18l23-1 6 8-6 9H6l6-8z" fill="#45b3ea"/><path d="M0 10l6 8 23-1-2-3z" fill="#b9dc84"/></svg>
                            <div>EasyConnect<div class="text-[#8a8a8a]">快捷方式</div><div class="text-[#8a8a8a]">1.25 KB</div></div>
                        </li>
                        <li class="flex h-[42px] items-center gap-[3px]">
                            <svg class="h-9 w-9" viewBox="0 0 36 36"><rect x="0" y="5" width="36" height="24" rx="2" fill="#35323a"/><path d="M0 19h36v8q0 2-2 2H2q-2 0-2-2z" fill="#8a119a"/><path d="M7 6l24 9-19 14z" fill="none" stroke="#2f6d17" stroke-width="6" stroke-linejoin="round"/><path d="M7 6l24 9-19 14z" fill="none" stroke="#6fbf3a" stroke-width="4" stroke-linejoin="round"/></svg>
                            <div>EDIUS 7<div class="text-[#8a8a8a]">快捷方式</div><div class="text-[#8a8a8a]">636 字节</div></div>
                        </li>
                    </ul>
                    <div class="flex w-3 flex-col items-center bg-[#f0f0f0]">
                        <svg class="my-1 h-1.5 w-2 rotate-180"><use href="#chev"/></svg>
                        <div class="h-[67px] w-[11px] bg-[#cdcdcd]"></div>
                        <svg class="mb-1 mt-auto h-1.5 w-2"><use href="#chev"/></svg>
                    </div>
                </div>
            </div>

            <!-- File name and type -->
            <form class="ml-[69px] flex shrink-0 flex-col gap-1 pb-3.5 pt-1.5">
                <div class="flex items-center">
                    <label for="fileName" class="w-[69px] whitespace-nowrap">文件名(N):</label>
                    <div class="relative mr-3.5 flex-1">
                        <input id="fileName" type="text" class="block h-4 w-full border border-[#569de5] bg-white px-1">
                        <span class="absolute left-[3px] top-[3px] h-2.5 w-px bg-black"></span>
                        <svg class="pointer-events-none absolute right-0.5 top-1.5 h-1.5 w-2"><use href="#chev"/></svg>
                    </div>
                    <button type="button" class="h-4 w-[65px] border border-[#569de5] bg-[#e8eef5] leading-3">打开(O)</button>
                </div>
                <div class="flex items-center">
                    <label for="fileType" class="w-[69px] whitespace-nowrap">文件类型(T):</label>
                    <div class="relative mr-3.5 flex-1">
                        <select id="fileType" class="block h-4 w-full appearance-none border border-[#acacac] bg-linear-to-b from-[#f0f0f0] to-[#e4e4e4] pl-0.5 leading-3"><option>所有格式</option></select>
                        <svg class="pointer-events-none absolute right-0.5 top-1.5 h-1.5 w-2"><use href="#chev"/></svg>
                    </div>
                    <button type="button" class="h-4 w-[65px] border border-[#acacac] bg-linear-to-b from-[#f0f0f0] to-[#e4e4e4] leading-3">取消</button>
                </div>
            </form>
        </div>
    </div>
</body>
</html>
